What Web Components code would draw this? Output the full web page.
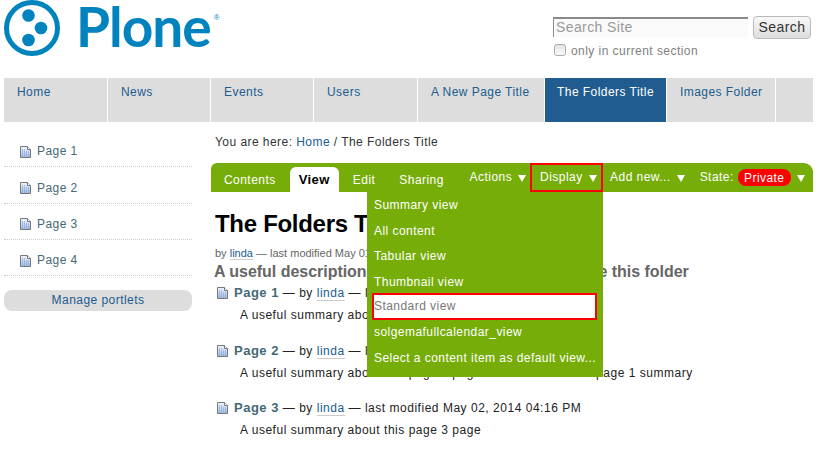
<!DOCTYPE html>
<html>
<head>
<meta charset="utf-8">
<style>
  html, body { margin: 0; background: #fff; }
  body { width: 819px; height: 450px; overflow: hidden; font: 12px/1.2 "Liberation Sans", Arial, sans-serif; letter-spacing: .45px; color: #333; }
</style>
</head>
<body>
<plone-page>
  <plone-header slot="header"></plone-header>
  <plone-nav slot="nav">
    <a>Home</a><a>News</a><a>Events</a><a>Users</a><a>A New Page Title</a><a class="on">The Folders Title</a><a>Images Folder</a>
  </plone-nav>
  <plone-sidebar slot="side"></plone-sidebar>
  <plone-content slot="main"></plone-content>
</plone-page>

<script>
const docIcon = `<svg width="11" height="12" viewBox="0 0 11 12" style="display:block;flex:none">
  <defs><linearGradient id="d" x1="0" y1="0" x2="0" y2="1"><stop offset="0" stop-color="#f2f6fc"/><stop offset="1" stop-color="#9dbce6"/></linearGradient></defs>
  <path d="M.5.5h7l3 3v8H.5z" fill="url(#d)" stroke="#777"/>
  <path d="M7.5.5v3h3" fill="#fff" stroke="#777"/>
  <path d="M2 4h4M2 6h7M2 8h7M2 10h7" stroke="#7d9ccf" stroke-dasharray="1 1"/>
</svg>`;

class PlonePage extends HTMLElement {
  connectedCallback() {
    this.attachShadow({ mode: 'open' });
    this.shadowRoot.innerHTML = `
      <style>
        :host { display: block; padding: 0 6px 0 4px; }
        .cols { display: grid; grid-template-columns: 188px 1fr; column-gap: 19px; }
      </style>
      <slot name="header"></slot>
      <slot name="nav"></slot>
      <div class="cols">
        <slot name="side"></slot>
        <slot name="main"></slot>
      </div>`;
  }
}

class PloneHeader extends HTMLElement {
  connectedCallback() {
    this.attachShadow({ mode: 'open' });
    this.shadowRoot.innerHTML = `
      <style>
        :host { display: flex; justify-content: space-between; height: 78px; }
        .logo { display: flex; align-items: flex-start; }
        .word { font: 700 55px/53px Lato, sans-serif; letter-spacing: -1px; color: #0083be; margin-left: 16px; position: relative; }
        sup { font: 8px/1 "Liberation Sans", sans-serif; position: absolute; right: -9px; top: 14px; letter-spacing: 0; }
        .search { width: 258px; padding-top: 16px; margin-right: 2px; box-sizing: border-box; letter-spacing: .4px; }
        .row { display: flex; gap: 5px; align-items: flex-start; }
        .input { width: 195px; height: 20px; margin-top: 1px; box-sizing: border-box; border-top: 2px solid #8a8a8a; border-left: 1px solid #8a8a8a; background: #fafafa; color: #999; font-size: 14px; line-height: 17px; padding-left: 2px; }
        .btn { width: 58px; height: 23px; box-sizing: border-box; border: 1px solid #bbb; border-radius: 4px; background: linear-gradient(#f8f8f8, #dedede); color: #333; font-size: 14px; line-height: 21px; text-align: center; }
        .opt { display: flex; gap: 5px; margin-top: 5px; color: #808080; align-items: center; padding-left: 1px; letter-spacing: .45px; }
        .cb { width: 12px; height: 12px; box-sizing: border-box; border: 1px solid #aaa; border-radius: 3px; background: linear-gradient(#e4e4e4, #fafafa); margin-top: -3px; }
      </style>
      <div class="logo">
        <svg width="56" height="56" viewBox="0 0 56 56">
          <circle cx="28" cy="28" r="25.5" fill="none" stroke="#0083be" stroke-width="5"/>
          <circle cx="24.5" cy="15.5" r="6.3" fill="#0083be"/>
          <circle cx="37" cy="28" r="6.3" fill="#0083be"/>
          <circle cx="24.5" cy="40" r="6.3" fill="#0083be"/>
        </svg>
        <div class="word">Plone<sup>®</sup></div>
      </div>
      <div class="search">
        <div class="row"><div class="input">Search Site</div><div class="btn">Search</div></div>
        <div class="opt"><span class="cb"></span><span>only in current section</span></div>
      </div>`;
  }
}

class PloneNav extends HTMLElement {
  connectedCallback() {
    const items = [...this.querySelectorAll('a')];
    const widths = [103, 102, 102, 103, 126, 121, 108];
    const links = items.map((a, i) =>
      `<div class="tab ${a.className}" style="flex-basis:${widths[i]}px">${a.textContent}</div>`).join('');
    this.attachShadow({ mode: 'open' });
    this.shadowRoot.innerHTML = `
      <style>
        :host { display: flex; gap: 1px; height: 44px; margin-bottom: 9px; }
        .tab { background: #ddd; color: #205c90; padding: 7px 0 0 13px; box-sizing: border-box; flex: 0 0 auto; white-space: nowrap; line-height: 15px; }
        .tab.on { background: #205c90; color: #fff; padding-left: 12px; }
        .fill { flex: 1; background: #ddd; }
      </style>
      ${links}<div class="fill"></div>`;
  }
}

class PloneSidebar extends HTMLElement {
  connectedCallback() {
    const pages = ['Page 1', 'Page 2', 'Page 3', 'Page 4'];
    this.attachShadow({ mode: 'open' });
    this.shadowRoot.innerHTML = `
      <style>
        :host { display: block; }
        .p { display: flex; align-items: center; gap: 6px; height: 36.3px; box-sizing: border-box; padding: 6px 0 0 16px; color: #436976; border-bottom: 1px dotted #ccc; }
        .manage { margin-top: 14px; height: 21px; border-radius: 8px; background: #ddd; color: #205c90; text-align: center; line-height: 21px; }
      </style>
      ${pages.map(p => `<div class="p">${docIcon}<span>${p}</span></div>`).join('')}
      <div class="manage">Manage portlets</div>`;
  }
}

class ContentBar extends HTMLElement {
  connectedCallback() {
    const arrow = '<i></i>';
    this.attachShadow({ mode: 'open' });
    this.shadowRoot.innerHTML = `
      <style>
        :host { display: flex; justify-content: space-between; height: 29px; padding-right: 8px; background: #76ad09; color: #fff; border-radius: 6px 9px 0 0; }
        .tabs { display: flex; margin-left: 2px; }
        .t { padding: 10px 11px 0; }
        .t.on { background: #fff; color: #000; font: bold 13px/15px "Liberation Sans", sans-serif; margin: 4px 0 0 3px; padding: 5px 9px 0; border-radius: 6px 6px 0 0; height: 20px; }
        .t.on + .t { padding: 10px 13px 0 14px; }
        .acts { display: flex; height: 29px; align-items: flex-start; }
        .a { padding-top: 7px; white-space: nowrap; }
        i { display: inline-block; width: 0; height: 0; border: 4px solid transparent; border-top: 7px solid #fff; border-bottom: 0; margin-left: 6px; vertical-align: -1px; }
        .disp { box-sizing: border-box; width: 73px; height: 29px; border: 2px solid #f00; padding: 5px 0 0 8px; margin: 0 7px 0 4px; white-space: nowrap; }
        .state { margin-left: 15px; }
        b { font-weight: normal; background: #f00; border-radius: 8px; padding: 1.5px 6.5px; margin-left: 0; }
      </style>
      <div class="tabs">
        <div class="t">Contents</div><div class="t on">View</div><div class="t">Edit</div><div class="t">Sharing</div>
      </div>
      <div class="acts">
        <div class="a">Actions${arrow}</div>
        <div class="disp">Display${arrow}</div>
        <div class="a">Add new...${arrow}</div>
        <div class="a state">State: <b>Private</b>${arrow}</div>
      </div>`;
  }
}

class DisplayMenu extends HTMLElement {
  connectedCallback() {
    const items = ['Summary view', 'All content', 'Tabular view', 'Thumbnail view', 'Standard view', 'solgemafullcalendar_view', 'Select a content item as default view...'];
    this.attachShadow({ mode: 'open' });
    this.shadowRoot.innerHTML = `
      <style>
        :host { display: block; position: absolute; left: 156px; top: 29px; width: 236px; height: 185px; background: #76ad09; color: #fff; box-sizing: border-box; padding: 1px 5px 0; }
        div { height: 25.6px; line-height: 25.6px; padding-left: 2px; white-space: nowrap; box-sizing: border-box; }
        .cur { background: #fff; color: #777; outline: 2px solid #f00; outline-offset: -2px; height: 27px; line-height: 27px; margin: -2.4px 1px 0 0; }
      </style>
      ${items.map((t, i) => `<div class="${i === 4 ? 'cur' : ''}">${t}</div>`).join('')}`;
  }
}

class FolderItem extends HTMLElement {
  connectedCallback() {
    const date = this.getAttribute('date');
    this.attachShadow({ mode: 'open' });
    this.shadowRoot.innerHTML = `
      <style>
        :host { display: block; height: 57.6px; color: #222; letter-spacing: .52px; }
        .top { display: flex; align-items: center; gap: 6px; height: 20px; padding-left: 6px; white-space: nowrap; }
        b { color: #436976; font-size: 13px; letter-spacing: .5px; }
        u { color: #205c90; text-decoration: none; border-bottom: 1px solid #ccc; }
        .sum { padding: 5px 0 0 29px; white-space: nowrap; }
      </style>
      <div class="top">${docIcon}<span><b>${this.getAttribute('name')}</b> — by <u>linda</u> — last modified ${date}</span></div>
      <div class="sum"><slot></slot></div>`;
  }
}

class PloneContent extends HTMLElement {
  connectedCallback() {
    this.attachShadow({ mode: 'open' });
    this.shadowRoot.innerHTML = `
      <style>
        :host { display: block; }
        .crumb { padding: 4px 0 14px 4px; color: #333; line-height: 14px; }
        .crumb a { color: #205c90; }
        .wrap { position: relative; }
        h1 { font: bold 24px/30px "Liberation Sans", sans-serif; letter-spacing: -.3px; margin: 17px 0 0 4px; color: #000; white-space: nowrap; }
        .by { font-size: 11px; letter-spacing: 0; color: #666; margin: 8px 0 0 4px; line-height: 13px; }
        .by a { color: #205c90; border-bottom: 1px solid #ccc; }
        .desc { font: bold 16px/20px "Liberation Sans", sans-serif; letter-spacing: -.03px; color: #666; margin: 2px 0 1px 3px; white-space: nowrap; }
      </style>
      <div class="crumb">You are here: <a>Home</a> / The Folders Title</div>
      <div class="wrap">
        <content-bar></content-bar>
        <display-menu></display-menu>
      </div>
      <h1>The Folders Title</h1>
      <div class="by">by <a>linda</a> — last modified May 01, 2014 04:16 PM</div>
      <div class="desc">A useful description to tell people what is put inside this folder</div>
      <folder-item name="Page 1" date="May 02, 2014 04:16 PM">A useful summary about this page 1 page</folder-item>
      <folder-item name="Page 2" date="May 02, 2014 04:16 PM">A useful summary about this page 2 page and is also not the page 1 summary</folder-item>
      <folder-item name="Page 3" date="May 02, 2014 04:16 PM">A useful summary about this page 3 page</folder-item>`;
  }
}

customElements.define('plone-page', PlonePage);
customElements.define('plone-header', PloneHeader);
customElements.define('plone-nav', PloneNav);
customElements.define('plone-sidebar', PloneSidebar);
customElements.define('content-bar', ContentBar);
customElements.define('display-menu', DisplayMenu);
customElements.define('folder-item', FolderItem);
customElements.define('plone-content', PloneContent);
</script>
</body>
</html>
